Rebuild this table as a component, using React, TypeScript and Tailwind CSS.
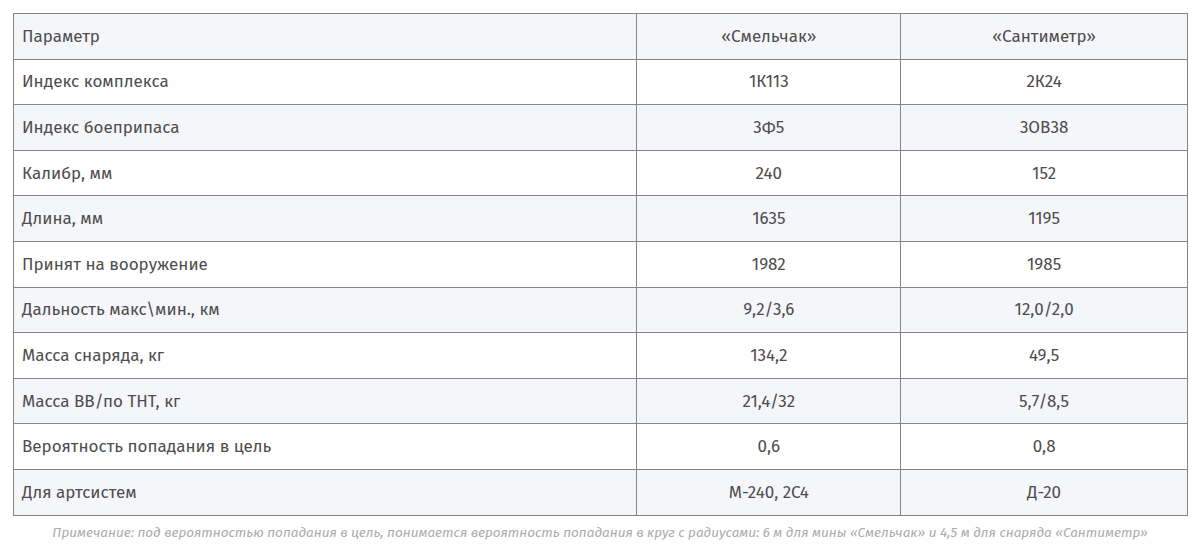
import React from "react";

const rows: [string, string, string][] = [
  ["Параметр", "«Смельчак»", "«Сантиметр»"],
  ["Индекс комплекса", "1К113", "2К24"],
  ["Индекс боеприпаса", "3Ф5", "3ОВ38"],
  ["Калибр, мм", "240", "152"],
  ["Длина, мм", "1635", "1195"],
  ["Принят на вооружение", "1982", "1985"],
  ["Дальность макс\\мин., км", "9,2/3,6", "12,0/2,0"],
  ["Масса снаряда, кг", "134,2", "49,5"],
  ["Масса ВВ/по ТНТ, кг", "21,4/32", "5,7/8,5"],
  ["Вероятность попадания в цель", "0,6", "0,8"],
  ["Для артсистем", "М-240, 2С4", "Д-20"],
];

export default function App() {
  return (
    <div
      className="w-[1200px] h-[550px] bg-white pt-[13px] px-[13px] text-[#4d4d4d]"
      style={{ fontFamily: "'Fira Sans', Roboto, 'Noto Sans', sans-serif" }}
    >
      <table className="w-[1175px] border-collapse border border-[#858585] text-[17px]">
        <colgroup>
          <col className="w-[624px]" />
          <col className="w-[264px]" />
          <col className="w-[287px]" />
        </colgroup>
        <tbody>
          {rows.map((r, i) => (
            <tr key={i} className={i % 2 === 0 ? "bg-[#f5f6fa]" : "bg-white"}>
              <td className="h-[45.6px] border border-[#858585] pl-[8px] py-0 align-middle leading-none">{r[0]}</td>
              <td className="h-[45.6px] border border-[#858585] text-center py-0 align-middle leading-none">{r[1]}</td>
              <td className="h-[45.6px] border border-[#858585] text-center py-0 align-middle leading-none">{r[2]}</td>
            </tr>
          ))}
        </tbody>
      </table>
      <p className="mt-[8px] text-center italic text-[13.5px] leading-[18px] text-[#aaa]">
        Примечание: под вероятностью попадания в цель, понимается вероятность попадания в круг с радиусами: 6 м для мины «Смельчак» и 4,5 м для снаряда «Сантиметр»
      </p>
    </div>
  );
}
